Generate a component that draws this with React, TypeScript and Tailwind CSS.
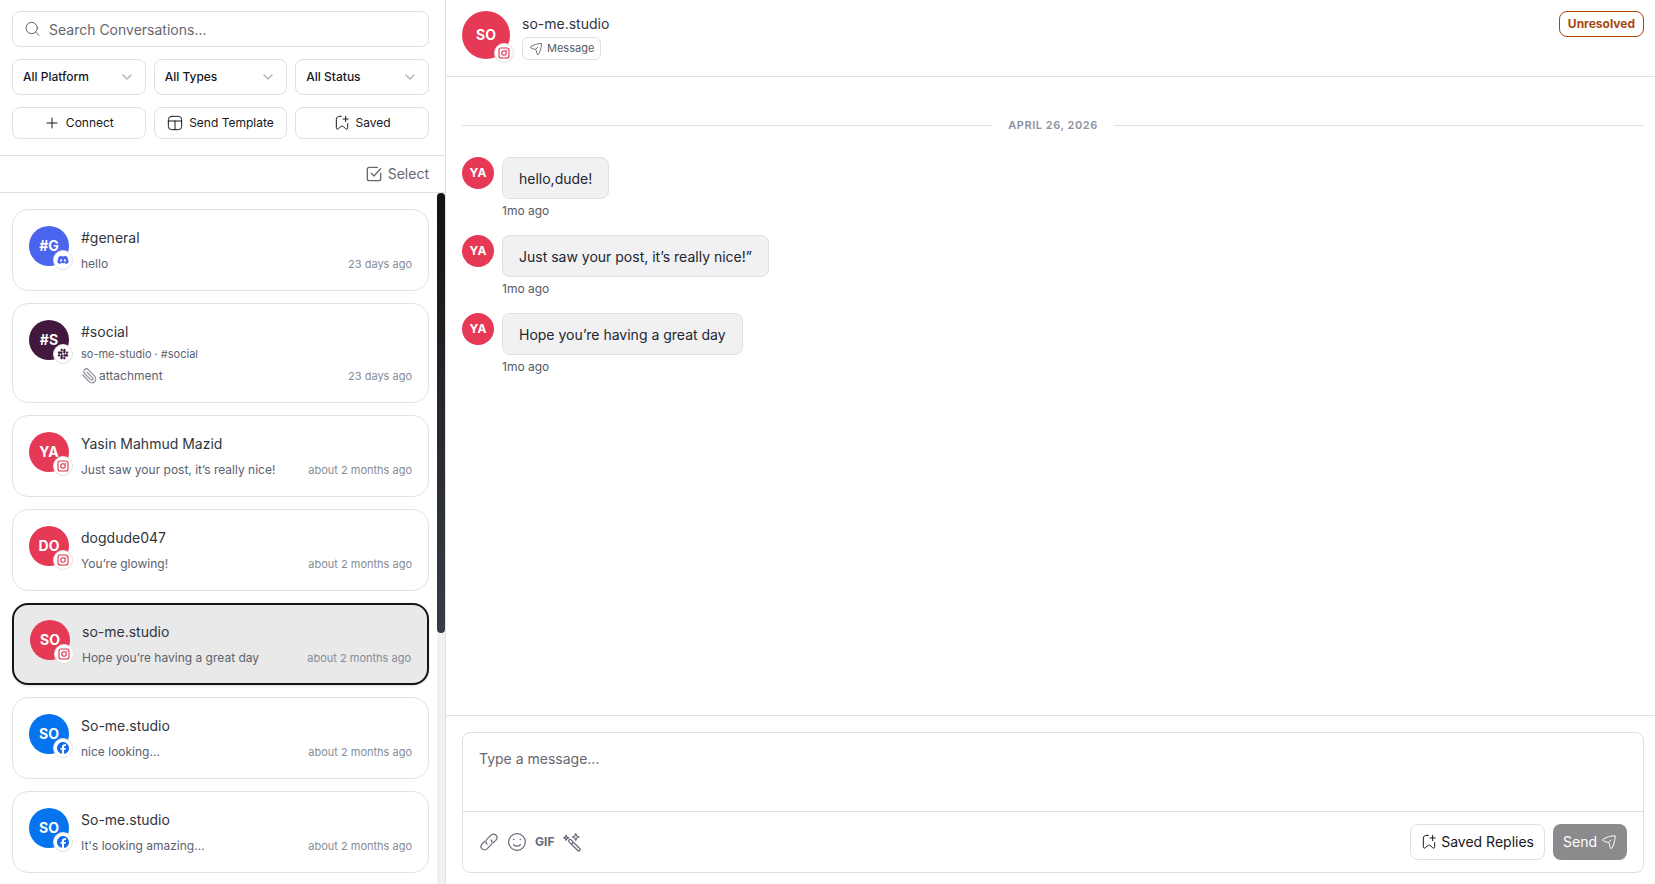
import type { ReactNode } from 'react';
import { FaDiscord, FaSlack } from 'react-icons/fa';

type Platform = 'discord' | 'slack' | 'instagram' | 'facebook';

type Conversation = {
  initials: string;
  name: string;
  channel?: string;
  preview: string;
  attachment?: boolean;
  time: string;
  platform: Platform;
  selected?: boolean;
};

const conversations: Conversation[] = [
  { initials: '#G', name: '#general', preview: 'hello', time: '23 days ago', platform: 'discord' },
  {
    initials: '#S',
    name: '#social',
    channel: 'so-me-studio · #social',
    preview: 'attachment',
    attachment: true,
    time: '23 days ago',
    platform: 'slack',
  },
  {
    initials: 'YA',
    name: 'Yasin Mahmud Mazid',
    preview: 'Just saw your post, it’s really nice!',
    time: 'about 2 months ago',
    platform: 'instagram',
  },
  { initials: 'DO', name: 'dogdude047', preview: 'You’re glowing!', time: 'about 2 months ago', platform: 'instagram' },
  {
    initials: 'SO',
    name: 'so-me.studio',
    preview: 'Hope you’re having a great day',
    time: 'about 2 months ago',
    platform: 'instagram',
    selected: true,
  },
  { initials: 'SO', name: 'So-me.studio', preview: 'nice looking...', time: 'about 2 months ago', platform: 'facebook' },
  { initials: 'SO', name: 'So-me.studio', preview: "It's looking amazing...", time: 'about 2 months ago', platform: 'facebook' },
];

const messages = ['hello,dude!', 'Just saw your post, it’s really nice!”', 'Hope you’re having a great day'];

const filters = ['All Platform', 'All Types', 'All Status'];

const avatarColors: Record<Platform, string> = {
  discord: 'bg-[#4a64ee]',
  slack: 'bg-[#42183f]',
  instagram: 'bg-[#e63956]',
  facebook: 'bg-[#0574ee]',
};

function Icon({ className, children, stroke = 1.5 }: { className: string; children: ReactNode; stroke?: number }) {
  return (
    <svg
      className={`shrink-0 ${className}`}
      viewBox="0 0 24 24"
      fill="none"
      stroke="currentColor"
      strokeWidth={stroke}
      strokeLinecap="round"
      strokeLinejoin="round"
      aria-hidden="true"
    >
      {children}
    </svg>
  );
}

function SendIcon({ className }: { className: string }) {
  return (
    <Icon className={className}>
      <path d="M21.05 2.95C19.07.83 2.35 6.7 2.36 8.84c.02 2.43 6.54 3.18 8.34 3.68 1.09.31 1.38.62 1.63 1.76 1.13 5.15 1.7 7.71 3 7.77 2.07.09 7.63-17.03 5.72-19.1Z" />
      <path d="m11.5 12.5 3.5-3.5" />
    </Icon>
  );
}

function BookmarkPlusIcon({ className }: { className: string }) {
  return (
    <Icon className={className}>
      <path d="M11 2H9C5.500 2 3.500 3.500 3.500 6.500V19c0 2.400 1.200 3 3 1.500l3.500-3c1.200-1 2.800-1 4 0l3.500 3c1.800 1.500 3 .9 3-1.500v-6" />
      <path d="M17.5 2v8M13.5 6h8" />
    </Icon>
  );
}

function PlatformLogo({ platform }: { platform: Platform }) {
  if (platform === 'discord') return <FaDiscord className="size-3 text-[#4a64ee]" aria-hidden="true" />;
  if (platform === 'slack') return <FaSlack className="size-3 text-[#42183f]" aria-hidden="true" />;
  if (platform === 'facebook') {
    return (
      <svg className="size-3" viewBox="0 0 24 24" fill="#1268ee" aria-hidden="true">
        <path d="M24 12a12 12 0 1 0-14.2 11.8v-8.1H7.1V12h2.7v-1.7c0-4 1.8-5.9 5.8-5.9.8 0 2 .2 2.5.3v3.3h-1.3c-2 0-2.7.7-2.7 2.7V12h3.9l-.7 3.7h-3.2V24A12 12 0 0 0 24 12Z" />
      </svg>
    );
  }
  return (
    <Icon className="size-3 text-[#e02f4d]" stroke={2.2}>
      <rect x="2" y="2" width="20" height="20" rx="4" />
      <circle cx="12" cy="12" r="4.5" />
      <path d="M17.5 6.5h.01" strokeWidth={2.5} />
    </Icon>
  );
}

function Avatar({ initials, platform, large }: { initials: string; platform: Platform; large?: boolean }) {
  return (
    <div className={`relative shrink-0 ${large ? 'size-12' : 'size-10'}`}>
      <div className={`flex size-full items-center justify-center rounded-full text-sm font-bold text-white ${avatarColors[platform]}`}>
        {initials}
      </div>
      <span className="absolute -right-1 -bottom-1 flex size-5 items-center justify-center rounded-full border border-[#e2e2e5] bg-white">
        <PlatformLogo platform={platform} />
      </span>
    </div>
  );
}

function ConversationCard({ item }: { item: Conversation }) {
  return (
    <button
      type="button"
      aria-pressed={Boolean(item.selected)}
      className={`flex w-full items-start gap-3 rounded-2xl px-4 text-left ${
        item.selected ? 'border-2 border-[#151517] bg-[#e9e9e9] py-[15px] shadow-sm' : 'border border-[#e2e2e5] bg-white py-4'
      }`}
    >
      <Avatar initials={item.initials} platform={item.platform} />
      <span className="min-w-0 flex-1">
        <span className="block truncate text-sm leading-6 text-[#30353f]">{item.name}</span>
        {item.channel && <span className="mt-0.5 block text-[11px] leading-4 text-[#5b6270]">{item.channel}</span>}
        <span className="mt-1 flex items-center justify-between gap-2">
          <span className="flex min-w-0 items-center gap-0.5 truncate text-xs leading-5 text-[#5b6270]">
            {item.attachment && (
              <Icon className="size-4 -scale-x-100 text-[#8b9199]" stroke={1.8}>
                <path d="m21 10.5-9 10a5.800 5.800 0 0 1-8.300-8.200l9.300-9.800a3.900 3.900 0 0 1 5.600 5.500l-9.300 9.700a2 2 0 0 1-2.800-2.800l8.300-8.500" />
              </Icon>
            )}
            {item.preview}
          </span>
          <span className="shrink-0 text-[11px] text-[#868c98]">{item.time}</span>
        </span>
      </span>
    </button>
  );
}

function Sidebar() {
  const actionClass = 'flex h-8 items-center justify-center gap-1.5 rounded-lg border border-[#e0e0e2] text-xs text-[#17181c]';

  return (
    <aside className="flex w-[446px] shrink-0 flex-col border-r border-[#e0e0e2]">
      <div className="flex flex-col gap-3 border-b border-[#e0e0e2] pt-[11px] pr-4 pb-4 pl-3">
        <label className="flex h-9 items-center gap-2 rounded-lg border border-[#e0e0e2] px-3">
          <Icon className="size-4 text-[#5f6068]">
            <circle cx="10" cy="10.5" r="8.5" />
            <path d="m16.500 17 4.500 4.500" />
          </Icon>
          <input
            type="search"
            aria-label="Search conversations"
            placeholder="Search Conversations..."
            className="h-full min-w-0 flex-1 bg-transparent text-sm outline-none placeholder:text-[#66676f]"
          />
        </label>

        <div className="grid grid-cols-3 gap-2">
          {filters.map((label) => (
            <div key={label} className="relative">
              <select
                aria-label={label}
                className="h-9 w-full appearance-none rounded-lg border border-[#e0e0e2] bg-white px-[10px] text-xs font-medium text-[#17181c]"
              >
                <option>{label}</option>
              </select>
              <Icon className="pointer-events-none absolute top-[10px] right-[11px] size-4 text-[#b0b1ba]" stroke={2}>
                <path d="m6 9 6 6 6-6" />
              </Icon>
            </div>
          ))}
        </div>

        <div className="grid grid-cols-3 gap-2">
          <button type="button" className={actionClass}>
            <Icon className="size-4">
              <path d="M12 4.5v15M4.500 12h15" />
            </Icon>
            Connect
          </button>
          <button type="button" className={actionClass}>
            <Icon className="size-4">
              <rect x="2" y="2" width="20" height="20" rx="5" />
              <path d="M2 9h20M12 9v13" />
            </Icon>
            Send Template
          </button>
          <button type="button" className={actionClass}>
            <BookmarkPlusIcon className="size-4" />
            Saved
          </button>
        </div>
      </div>

      <div className="flex justify-end border-b border-[#e0e0e2] py-2 pr-4">
        <button type="button" className="flex items-center gap-1.5 text-sm leading-5 text-[#66676f]">
          <Icon className="size-4" stroke={2}>
            <path d="M22 11v8a3 3 0 0 1-3 3H5a3 3 0 0 1-3-3V5a3 3 0 0 1 3-3h12" />
            <path d="m8 11 4 4L22 4" />
          </Icon>
          Select
        </button>
      </div>

      <div className="flex min-h-0 flex-1">
        <div className="flex min-w-0 flex-1 flex-col gap-3 overflow-hidden pt-4 pr-2 pl-3">
          {conversations.map((item, index) => (
            <ConversationCard key={index} item={item} />
          ))}
        </div>
        <div className="w-2 shrink-0 bg-[#f0f0f3]">
          <div className="h-7/11 rounded-full bg-linear-to-b from-[#111214] via-[#25292d] to-[#383c46]" />
        </div>
      </div>
    </aside>
  );
}

function Composer() {
  return (
    <div className="border-t border-[#e0e0e2] pt-4 pr-[11px] pb-[11px] pl-4">
      <div className="rounded-lg border border-[#e0e0e2]">
        <textarea
          aria-label="Message"
          placeholder="Type a message..."
          className="block h-[78px] w-full resize-none bg-transparent px-4 py-4 text-sm outline-none placeholder:text-[#66676f]"
        />
        <div className="flex items-center justify-between border-t border-[#e0e0e2] px-4 py-3">
          <div className="flex items-center gap-2 text-[#656b78]">
            <button type="button" aria-label="Attach file">
              <Icon className="size-5">
                <path d="M9.5 14.5c-1.900-1.700-1.500-4.400.4-6.200l4.200-4.200c1.900-1.800 4.700-1.900 6.300-.3s1.500 4.300-.3 6.200l-2.700 2.600" />
                <path d="M14.5 9.5c1.900 1.700 1.500 4.400-.4 6.200l-4.200 4.200c-1.900 1.800-4.700 1.900-6.300.3s-1.500-4.300.3-6.200l2.700-2.600" />
              </Icon>
            </button>
            <button type="button" aria-label="Add emoji">
              <Icon className="size-5">
                <circle cx="12" cy="12" r="10" />
                <path d="M8 15c.9 1.200 2.400 2 4 2s3.100-.8 4-2" />
                <path d="M8 9h.01M16 9h.01" strokeWidth={2} />
              </Icon>
            </button>
            <button type="button" className="text-xs font-bold">
              GIF
            </button>
            <button type="button" aria-label="Write with AI">
              <Icon className="size-5">
                <path d="M8.500 9.500c.7-.7 1.700-.7 2.400 0l10.300 10.300c.7.7.7 1.700 0 2.400s-1.700.7-2.400 0L8.500 11.900c-.7-.7-.7-1.700 0-2.400ZM11.500 14.500l2.200-2.200" />
                <path d="m16.500 2 1.200 2.800L20.500 6l-2.800 1.200-1.200 2.800-1.200-2.800L12.500 6l2.800-1.200L16.500 2ZM5 4l.9 2.100L8 7l-2.100.9L5 10l-.9-2.100L2 7l2.100-.9L5 4Z" />
              </Icon>
            </button>
          </div>
          <div className="flex gap-2">
            <button type="button" className="flex h-9 items-center gap-1 rounded-lg border border-[#e0e0e2] px-[10px] text-sm text-[#17181c]">
              <BookmarkPlusIcon className="size-4" />
              Saved Replies
            </button>
            <button type="button" disabled className="flex h-9 items-center gap-1 rounded-lg bg-[#8b8b8d] px-[10px] text-sm text-white">
              Send
              <SendIcon className="size-4" />
            </button>
          </div>
        </div>
      </div>
    </div>
  );
}

export default function App() {
  return (
    <div className="flex h-screen bg-white font-['Inter',sans-serif] text-[#22262e]">
      <Sidebar />

      <main className="flex min-w-0 flex-1 flex-col">
        <header className="flex items-start justify-between border-b border-[#e0e0e2] pt-[11px] pr-[11px] pb-4 pl-4">
          <div className="flex items-start gap-3">
            <Avatar initials="SO" platform="instagram" large />
            <div className="flex flex-col items-start">
              <h1 className="text-sm leading-[26px] text-[#30353f]">so-me.studio</h1>
              <span className="flex h-[23px] items-center gap-1 rounded-md border border-[#e0e0e2] px-[6px] text-[11px] text-[#555b68]">
                <SendIcon className="size-[14px]" />
                Message
              </span>
            </div>
          </div>
          <span className="rounded-lg border border-[#a9480c] px-2 text-xs leading-6 font-bold text-[#a9480c]">Unresolved</span>
        </header>

        <section className="flex min-h-0 flex-1 flex-col gap-4 pt-10 pr-[11px] pl-4">
          <div className="mb-2 flex items-center gap-4">
            <div className="h-px flex-1 bg-[#e0e0e2]" />
            <span className="text-[11px] leading-4 font-semibold tracking-wider text-[#8b92a0]">APRIL 26, 2026</span>
            <div className="h-px flex-1 bg-[#e0e0e2]" />
          </div>

          {messages.map((text) => (
            <div key={text} className="flex items-start gap-2">
              <div className="flex size-8 items-center justify-center rounded-full bg-[#e63956] text-xs font-bold text-white">YA</div>
              <div className="flex flex-col items-start gap-1">
                <p className="rounded-lg border border-[#e0e0e4] bg-[#f1f1f4] px-4 pt-[11px] pb-[9px] text-sm leading-5">{text}</p>
                <time className="text-xs text-[#555a64]">1mo ago</time>
              </div>
            </div>
          ))}
        </section>

        <Composer />
      </main>
    </div>
  );
}
